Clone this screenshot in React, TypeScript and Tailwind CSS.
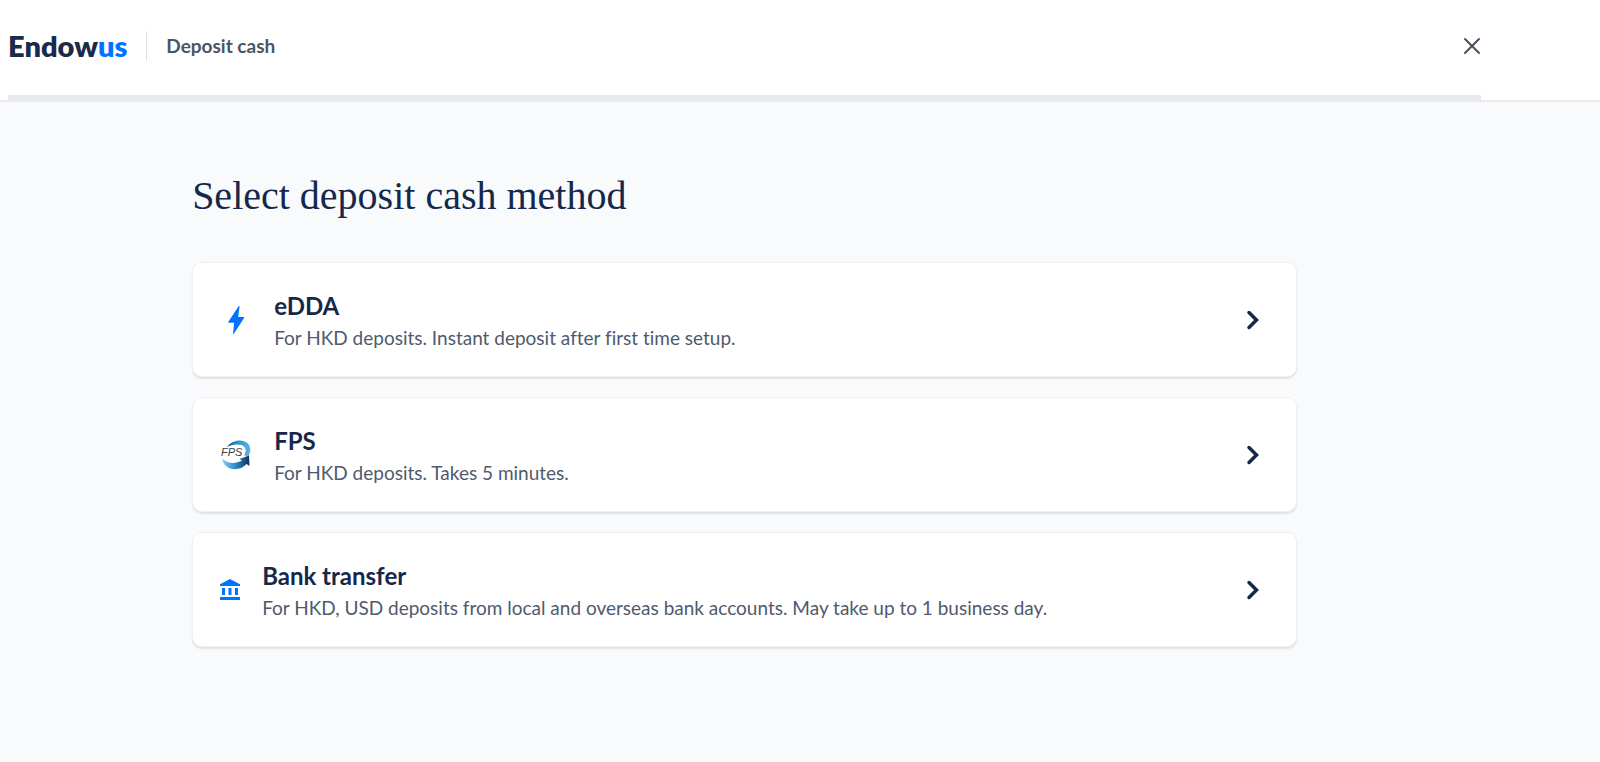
import React from 'react';

type Method = {
  id: string;
  title: string;
  description: string;
  icon: React.ReactNode;
};

function BoltIcon() {
  return (
    <svg className="h-9 w-9 shrink-0" viewBox="0 0 36 36" fill="#0073ff" aria-hidden="true">
      <path d="M20.6 4.2 L10.2 20 Q10 20.700 10.700 20.700 H16.200 L15 31.600 Q15.300 32.300 16 31.600 L26.200 15.800 Q26.400 15 25.600 15 H20.200 L21.600 4.600 Q21.300 3.600 20.600 4.200 Z" />
    </svg>
  );
}

function FpsIcon() {
  return (
    <svg className="h-9 w-9 shrink-0" viewBox="0 0 36 36" aria-hidden="true">
      <defs>
        <linearGradient id="fpsTop" x1="0" y1="0" x2="1" y2="0">
          <stop offset="0" stopColor="#0e5f9e" />
          <stop offset="0.5" stopColor="#2f96cf" />
          <stop offset="1" stopColor="#5fb4de" />
        </linearGradient>
        <linearGradient id="fpsBottom" x1="0" y1="0" x2="1" y2="0">
          <stop offset="0" stopColor="#8bd3f2" />
          <stop offset="0.5" stopColor="#2b86c4" />
          <stop offset="1" stopColor="#0c2f63" />
        </linearGradient>
      </defs>
      <path
        d="M9 10 C13 4.500 20 2.500 26 4.200 C32.500 6.200 34 13 30.500 19 L26 18.500 C29 14 28 9.500 23.500 8 C19 6.800 13.500 7.500 9 10 Z"
        fill="url(#fpsTop)"
      />
      <path
        d="M4.500 21.500 C9 26.500 17 27.500 24 23.500 L21.500 22 L31 18.500 L31.500 29 L28.500 27 C23 33 13.500 34 8 29 C5.500 27 4.500 24.500 4.500 21.500 Z"
        fill="url(#fpsBottom)"
      />
      <text
        x="3"
        y="19"
        fontSize="11"
        fontWeight="400"
        fontStyle="italic"
        fill="#3c3c3c"
        stroke="#ffffff"
        strokeWidth="1.500"
        paintOrder="stroke"
        className="font-['Liberation_Sans',sans-serif]"
      >
        FPS
      </text>
    </svg>
  );
}

function BankIcon() {
  return (
    <svg className="h-6 w-6 shrink-0" viewBox="0 0 24 24" fill="#0073ff" aria-hidden="true">
      <path d="M12 1 L22 6.200 V8 H2 V6.200 Z" />
      <path d="M4 10 H7 V17 H4 Z M10.500 10 H13.500 V17 H10.500 Z M17 10 H20 V17 H17 Z" />
      <path d="M2 19 H22 V22 H2 Z" />
    </svg>
  );
}

const methods: Method[] = [
  {
    id: 'edda',
    title: 'eDDA',
    description: 'For HKD deposits. Instant deposit after first time setup.',
    icon: <BoltIcon />,
  },
  {
    id: 'fps',
    title: 'FPS',
    description: 'For HKD deposits. Takes 5 minutes.',
    icon: <FpsIcon />,
  },
  {
    id: 'bank',
    title: 'Bank transfer',
    description:
      'For HKD, USD deposits from local and overseas bank accounts. May take up to 1 business day.',
    icon: <BankIcon />,
  },
];

function Header() {
  return (
    <header className="border-b-2 border-[#ebecee] bg-white">
      <div className="mr-[119px] ml-2">
        <div className="flex h-[95px] items-center pb-[3px]">
          <a href="#" className="text-[29px] leading-8 font-extrabold text-[#1a2b49]">
            Endow<span className="text-[#0073ff]">us</span>
          </a>
          <div className="ml-[19px] h-[30px] w-px bg-[#dfe1e5]" />
          <h2 className="ml-[19px] text-[19px] leading-8 font-bold text-[#4a5568]">Deposit cash</h2>
          <button type="button" aria-label="Close" className="ml-auto text-[#46505f]">
            <svg
              className="h-[18px] w-[18px]"
              viewBox="0 0 18 18"
              fill="none"
              stroke="currentColor"
              strokeWidth="2"
              strokeLinecap="round"
            >
              <path d="M2 2 L16 16 M16 2 L2 16" />
            </svg>
          </button>
        </div>
        {/* progress track */}
        <div className="h-[5px] bg-[#e8e9ed]" />
      </div>
    </header>
  );
}

function MethodCard({ method }: { method: Method }) {
  return (
    <button
      type="button"
      className="flex w-full items-center rounded-[10px] border border-[#eff0f3] bg-white px-[25px] pt-[23px] pb-[22px] text-left shadow-[0_2px_2px_rgba(0,0,0,0.1)]"
    >
      {method.icon}
      <span className="ml-5 flex-1 pt-1">
        <span className="block text-[24px] leading-8 font-bold text-[#15284b]">{method.title}</span>
        <span className="block text-[19px] leading-8 text-[#4f5a6d]">{method.description}</span>
      </span>
      <svg
        className="mr-1.5 h-6 w-6 shrink-0"
        viewBox="0 0 24 24"
        fill="none"
        stroke="#15284b"
        strokeWidth="3.5"
        strokeLinecap="round"
        aria-hidden="true"
      >
        <path d="M8 4.500 L15.500 12 L8 19.500" />
      </svg>
    </button>
  );
}

export default function App() {
  return (
    <div className="min-h-screen bg-[#f9fafc] font-['Lato',sans-serif] [font-variant-ligatures:none]">
      <Header />
      <main className="mr-[119px] ml-2">
        <div className="mx-auto w-3/4 pt-[68px]">
          <h1 className="font-['Liberation_Serif',serif] text-[40px] leading-[52px] text-[#15284b]">
            Select deposit cash method
          </h1>
          <div className="mt-10 flex flex-col gap-5">
            {methods.map((method) => (
              <MethodCard key={method.id} method={method} />
            ))}
          </div>
        </div>
      </main>
    </div>
  );
}
